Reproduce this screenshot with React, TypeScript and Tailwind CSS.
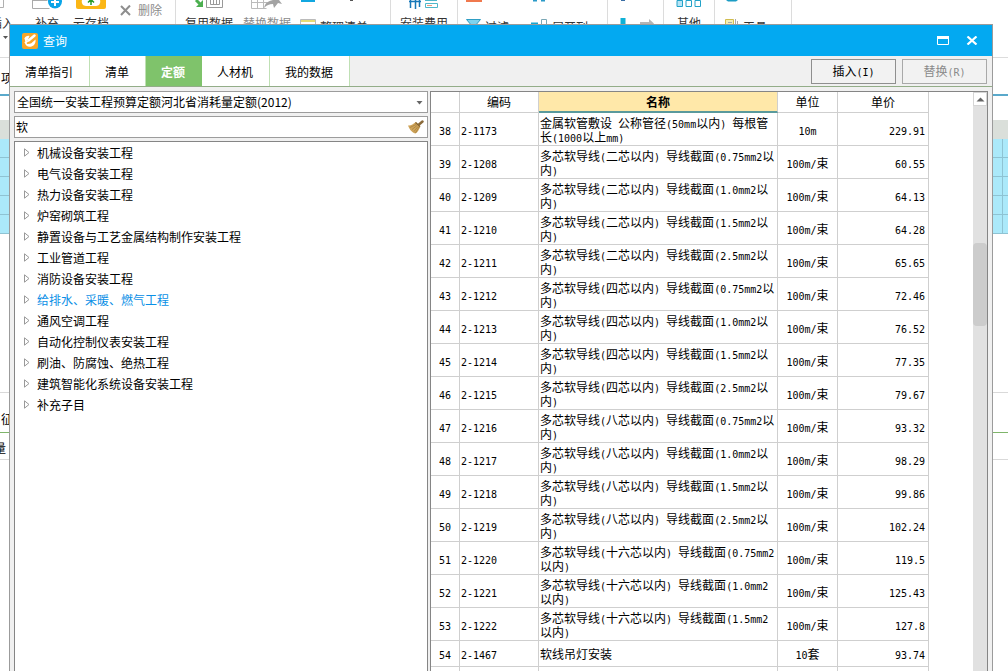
import React, { useState } from 'react';

const CATEGORIES = [
  '机械设备安装工程',
  '电气设备安装工程',
  '热力设备安装工程',
  '炉窑砌筑工程',
  '静置设备与工艺金属结构制作安装工程',
  '工业管道工程',
  '消防设备安装工程',
  '给排水、采暖、燃气工程',
  '通风空调工程',
  '自动化控制仪表安装工程',
  '刷油、防腐蚀、绝热工程',
  '建筑智能化系统设备安装工程',
  '补充子目'
];

const TABS = ['清单指引', '清单', '定额', '人材机', '我的数据'];

interface Row {
  no: number;
  code: string;
  name: string;
  unit: string;
  price: string;
}

const ROWS: Row[] = [
  { no: 38, code: '2-1173', name: '金属软管敷设 公称管径(50mm以内) 每根管长(1000以上mm)', unit: '10m', price: '229.91' },
  { no: 39, code: '2-1208', name: '多芯软导线(二芯以内) 导线截面(0.75mm2以内)', unit: '100m/束', price: '60.55' },
  { no: 40, code: '2-1209', name: '多芯软导线(二芯以内) 导线截面(1.0mm2以内)', unit: '100m/束', price: '64.13' },
  { no: 41, code: '2-1210', name: '多芯软导线(二芯以内) 导线截面(1.5mm2以内)', unit: '100m/束', price: '64.28' },
  { no: 42, code: '2-1211', name: '多芯软导线(二芯以内) 导线截面(2.5mm2以内)', unit: '100m/束', price: '65.65' },
  { no: 43, code: '2-1212', name: '多芯软导线(四芯以内) 导线截面(0.75mm2以内)', unit: '100m/束', price: '72.46' },
  { no: 44, code: '2-1213', name: '多芯软导线(四芯以内) 导线截面(1.0mm2以内)', unit: '100m/束', price: '76.52' },
  { no: 45, code: '2-1214', name: '多芯软导线(四芯以内) 导线截面(1.5mm2以内)', unit: '100m/束', price: '77.35' },
  { no: 46, code: '2-1215', name: '多芯软导线(四芯以内) 导线截面(2.5mm2以内)', unit: '100m/束', price: '79.67' },
  { no: 47, code: '2-1216', name: '多芯软导线(八芯以内) 导线截面(0.75mm2以内)', unit: '100m/束', price: '93.32' },
  { no: 48, code: '2-1217', name: '多芯软导线(八芯以内) 导线截面(1.0mm2以内)', unit: '100m/束', price: '98.29' },
  { no: 49, code: '2-1218', name: '多芯软导线(八芯以内) 导线截面(1.5mm2以内)', unit: '100m/束', price: '99.86' },
  { no: 50, code: '2-1219', name: '多芯软导线(八芯以内) 导线截面(2.5mm2以内)', unit: '100m/束', price: '102.24' },
  { no: 51, code: '2-1220', name: '多芯软导线(十六芯以内) 导线截面(0.75mm2以内)', unit: '100m/束', price: '119.5' },
  { no: 52, code: '2-1221', name: '多芯软导线(十六芯以内) 导线截面(1.0mm2以内)', unit: '100m/束', price: '125.43' },
  { no: 53, code: '2-1222', name: '多芯软导线(十六芯以内) 导线截面(1.5mm2以内)', unit: '100m/束', price: '127.8' },
  { no: 54, code: '2-1467', name: '软线吊灯安装', unit: '10套', price: '93.74' }
];

// Half-width characters go in a mono face, half as wide as the Chinese ones
const Mixed: React.FC<{ text: string }> = ({ text }) => (
  <>
    {text.split(/([\x20-\x7e]+)/).map((part, i) =>
      i % 2 ? (
        <span key={i} className="font-['DejaVu_Sans_Mono',monospace] text-[10px] leading-none">{part}</span>
      ) : (
        part
      )
    )}
  </>
);

const BigTool: React.FC<{ label: string; muted?: boolean; children?: React.ReactNode }> = ({ label, muted, children }) => (
  <button className={`flex flex-col items-center whitespace-nowrap leading-4 ${muted ? 'text-[#8c8c8c]' : 'text-[#333]'}`}>
    <span className="flex h-[15px] items-start justify-center">{children}</span>
    {label}
  </button>
);

const SmallTool: React.FC<{ label: string; top?: React.ReactNode; icon: React.ReactNode }> = ({ label, top, icon }) => (
  <div className="flex flex-col">
    <span className="flex h-[19px] items-start">{top}</span>
    <button className="flex items-start gap-1 whitespace-nowrap leading-4 text-[#333]">
      {icon}
      {label}
    </button>
  </div>
);

const Ribbon: React.FC = () => (
  <header className="flex h-[58px] items-stretch overflow-hidden border-b border-[#dcdcdc] bg-white">
    <div className="flex shrink-0 items-start border-r border-[#dcdcdc] pr-[13px]">
      <div className="-ml-[10px] mr-[21px] flex w-6 flex-col items-center">
        <BigTool label="插入">
          <svg width="24" height="9" viewBox="0 0 24 9" fill="none" stroke="#b0b0b0">
            <path d="M0 7.500h13.500V0M9.500 0v4" />
          </svg>
        </BigTool>
        <svg className="ml-[6px] mt-1" width="7" height="5" viewBox="0 0 7 5">
          <path d="M1 1h5L3.500 4z" fill="#555" />
        </svg>
      </div>
      <div className="flex w-6 justify-center">
        <BigTool label="补充">
          <svg width="32" height="10" viewBox="0 0 32 10" fill="none">
            <path d="M1.500 0v8.500h17M1.500 0.500h15" stroke="#aaa" />
            <circle cx="24" cy="1.500" r="7" fill="#0aa5e8" />
            <path d="M20 2h8M24 0v6" stroke="#fff" strokeWidth="2" />
          </svg>
        </BigTool>
      </div>
      <div className="ml-[14px] w-9">
        <BigTool label="云存档">
          <svg width="30" height="10" viewBox="0 0 30 10">
            <path d="M0 0h30v7a2 2 0 0 1-2 2H2a2 2 0 0 1-2-2z" fill="#fbb615" />
            <path d="M6 0h18c1 3-1 6-4 6H10C7 6 5 3 6 0z" fill="#fff" />
            <path d="M15 5V0M12 2.500l3-3 3 3" stroke="#2a9a2a" strokeWidth="1.500" fill="none" />
          </svg>
        </BigTool>
      </div>
      <button className="ml-[11px] mt-[2px] flex items-center gap-[7px] whitespace-nowrap leading-4 text-[#8c8c8c]">
        <svg width="11" height="11" viewBox="0 0 11 11" stroke="#8e8e8e" strokeWidth="2">
          <path d="M1 1l9 9M10 0.500L1 10" />
        </svg>
        删除
      </button>
    </div>

    <div className="flex shrink-0 items-start border-r border-[#dcdcdc] pl-[9px] pr-[22px]">
      <BigTool label="复用数据">
        <svg width="30" height="9" viewBox="0 0 30 9" fill="none">
          <path d="M2 0l5 5" stroke="#4caf50" strokeWidth="3" />
          <path d="M9 0v7H2z" fill="#4caf50" />
          <path d="M12.500 0v7.500h16V0M16.500 0v4.500h9V0M19.500 0v4M22.500 0v4" stroke="#999" />
        </svg>
      </BigTool>
      <div className="ml-[10px]">
        <BigTool label="替换数据" muted>
          <svg width="32" height="9" viewBox="0 0 32 9" fill="none">
            <path d="M0.500 0v8.500h15M0.500 2.500h16M6.500 0v8M12.500 0v8" stroke="#bbb" />
            <path d="M13 8c1-5 4-7 9-8h6l3 4-4-1-4 5-1-4c-4 0-6 1-9 4z" fill="#a3a3a3" />
          </svg>
        </BigTool>
      </div>
      <div className="ml-[9px]">
        <SmallTool
          label="整理清单"
          top={
            <svg width="54" height="4" viewBox="0 0 54 4">
              <path d="M1 0h14v2H1z" fill="#12a7e0" />
              <path d="M50 0h3v1h-3z" fill="#555" />
            </svg>
          }
          icon={
            <svg width="16" height="14" viewBox="0 0 16 14" fill="none">
              <path d="M0.500 0.500h15v13H0.500z" stroke="#bbb" />
              <path d="M1 1h14v2H1z" fill="#e7dc74" />
              <path d="M3 5.500h6M3 8.500h9" stroke="#58b0d8" />
            </svg>
          }
        />
      </div>
    </div>

    <div className="flex shrink-0 items-start border-r border-[#dcdcdc] px-[9px]">
      <BigTool label="安装费用">
        <svg width="30" height="10" viewBox="0 0 30 10" fill="none">
          <path d="M1.500 0v8M6.500 0v9M10.500 0v7M0 1.500h12" stroke="#1678b8" strokeWidth="1.500" />
          <path d="M16.500 3.500h12v4h-12zM16 0.500h12" stroke="#4fb7c9" />
          <path d="M18 5.500h5" stroke="#e59a7b" />
        </svg>
      </BigTool>
    </div>

    <div className="flex shrink-0 items-start gap-[22px] border-r border-[#dcdcdc] pl-2 pr-[19px]">
      <SmallTool
        label="过滤"
        top={
          <svg width="16" height="3" viewBox="0 0 16 3">
            <path d="M0 0h16v2H0z" fill="#f0794e" />
          </svg>
        }
        icon={
          <svg width="15" height="13" viewBox="0 0 15 13">
            <path d="M0.500 0.500h14L9 7v6l-3-2V7z" fill="#7ed3ee" stroke="#2f9ec4" />
          </svg>
        }
      />
      <SmallTool
        label="展开列"
        top={
          <svg width="16" height="3" viewBox="0 0 16 3">
            <path d="M2 0h4v1.500H2zM10 0h4v1.500h-4z" fill="#2b9ac8" />
          </svg>
        }
        icon={
          <svg width="17" height="13" viewBox="0 0 17 13" fill="none">
            <path d="M10.500 0.500h5v12h-5z" stroke="#7aa7b5" />
            <path d="M0 4.500h7" stroke="#18a5cf" strokeWidth="2" />
          </svg>
        }
      />
    </div>

    <div className="flex shrink-0 items-start gap-3 border-r border-[#dcdcdc] pl-[11px] pr-2">
      <svg width="8" height="30" viewBox="0 0 8 30">
        <path d="M2 0h4v1H2z" fill="#3a6ea5" />
        <path d="M1.500 18h5v12h-5z" fill="#0fb1d6" />
      </svg>
      <svg width="16" height="30" viewBox="0 0 16 30">
        <path d="M1 22h9v-3l5 4.500-5 4.500v-3H1z" fill="#b5b5b5" />
      </svg>
    </div>

    <div className="flex shrink-0 items-start justify-center border-r border-[#dcdcdc] px-3">
      <BigTool label="其他">
        <svg width="26" height="8" viewBox="0 0 26 8" fill="none" stroke="#22a2c8">
          <path d="M1 0.500h5.500v6H1z" fill="#b9e4f5" />
          <path d="M10 0.500h5.500v6H10zM19 0.500h5.500v6H19z" />
        </svg>
      </BigTool>
    </div>

    <div className="flex shrink-0 items-start border-r border-[#dcdcdc] pl-[9px] pr-6">
      <SmallTool
        label="工具"
        top={
          <svg width="16" height="3" viewBox="0 0 16 3">
            <path d="M2 0h12l-2 1.500H4z" fill="#1b9cc4" />
          </svg>
        }
        icon={
          <svg width="15" height="13" viewBox="0 0 15 13" fill="none">
            <path d="M1.500 0.500h8v12h-8z" fill="#f5eeb4" stroke="#d1bd50" />
            <path d="M11.500 0v12M13.500 2v9M4 3.500h4" stroke="#aaa" />
          </svg>
        }
      />
    </div>
  </header>
);

// Main workspace, seen only at the edges of the dialog
const Workspace: React.FC = () => (
  <div className="flex flex-col text-black">
    <div className="flex h-[38px] items-center border-b-2 border-[#5aa9cb] pl-px pt-1 leading-4">项</div>
    <div className="h-6" />
    <div className="h-[19px] bg-[#dadfda]" />
    {[0, 1, 2, 3, 4].map((n) => (
      <div key={n} className="flex h-[19px] justify-end border-b border-[#8fc3d3] bg-[#abe9fa]">
        <div className="w-[6px] border-l border-[#8fc3d3]" />
      </div>
    ))}
    <div className="h-[159px] border-b border-[#d9d9d9]" />
    <div className="h-[9px]" />
    <div className="flex h-[31px] items-center border-b border-[#7fb56a] pl-px pt-1 leading-4">征</div>
    <div className="flex h-[27px] items-center border-b border-[#d9d9d9] pt-1">
      <span className="-ml-1.5 leading-4">量</span>
    </div>
  </div>
);

const App: React.FC = () => {
  const [tab, setTab] = useState('定额');
  const [selected, setSelected] = useState('给排水、采暖、燃气工程');
  const [keyword, setKeyword] = useState('软');

  return (
    <div className="relative h-screen overflow-hidden bg-white font-['Noto_Sans_CJK_SC',sans-serif] text-xs text-black">
      <Ribbon />
      <Workspace />

      {/* Query dialog */}
      <div className="absolute bottom-0 left-[9px] right-[15px] top-6 flex flex-col border border-b-0 border-[#9b9b9b] bg-[#f0f0f0]">
        <div className="flex h-[31px] shrink-0 items-center bg-[#03a9f1] pl-3 pr-[14px] text-white">
          <svg width="16" height="16" viewBox="0 0 16 16" fill="none" strokeLinecap="round">
            <rect width="16" height="16" rx="2" fill="#f8a629" />
            <path d="M2.500 5.500C3 3.500 5.500 2.500 7.500 3L6 6.500 3.500 9z" fill="#fff" />
            <path d="M6.500 7.500L12.500 2.500" stroke="#fff" strokeWidth="2.500" />
            <path d="M3 10c.5 3 3.500 4.500 6.500 3.500 3-1 4.500-4 4-7L9 10.500z" fill="#fff" />
            <path d="M3.500 9.500L5 8.500" stroke="#fff" strokeWidth="2" />
            <path d="M5.500 10.500l2.500-.5 5-4.500" stroke="#f8a629" />
          </svg>
          <h1 className="ml-[5px] flex-1 leading-4">查询</h1>
          <button aria-label="最大化" className="mr-[17px]">
            <svg width="12" height="9" viewBox="0 0 12 9" fill="none" stroke="#fff">
              <path d="M0.500 0.500h11v8H0.500z" />
              <path d="M0 1.500h12" strokeWidth="3" />
            </svg>
          </button>
          <button aria-label="关闭">
            <svg width="12" height="9" viewBox="0 0 12 9" stroke="#fff" strokeWidth="2.200">
              <path d="M1.500 0.500l9 8M10.500 0.500l-9 8" />
            </svg>
          </button>
        </div>

        <div className="flex h-[31px] shrink-0 items-center justify-between border-b border-[#93ad88] pr-[5px]">
          <div role="tablist" className="flex h-full bg-white">
            {TABS.map((t) => (
              <button
                key={t}
                role="tab"
                aria-selected={t === tab}
                onClick={() => setTab(t)}
                className={`whitespace-nowrap border-r pl-[15px] pr-4 pt-[2px] ${
                  t === tab ? 'border-[#7fc36b] bg-[#7fc36b] font-bold text-white' : 'border-[#bfe0b4]'
                }`}
              >
                {t}
              </button>
            ))}
          </div>
          <div className="flex gap-[6px]">
            <button className="h-[25px] w-[85px] border border-[#8f8f8f] bg-[#f2f2f2]">
              <Mixed text="插入(I)" />
            </button>
            <button disabled className="h-[25px] w-[85px] border border-[#a9a9a9] bg-[#f2f2f2] text-[#8a8a8a]">
              <Mixed text="替换(R)" />
            </button>
          </div>
        </div>

        <div className="flex min-h-0 flex-1 gap-[2px] px-1 pt-1">
          <div className="flex w-[414px] shrink-0 flex-col gap-[3px]">
            <div className="relative shrink-0">
              <select aria-label="定额库" className="block h-[22px] w-full appearance-none border border-[#9c9c9c] bg-white pl-[2px] pr-5">
                <option>全国统一安装工程预算定额河北省消耗量定额(2012)</option>
              </select>
              <svg className="pointer-events-none absolute right-[5px] top-[10px]" width="7" height="4" viewBox="0 0 7 4">
                <path d="M0.500 0h6L3.500 3.500z" fill="#666" />
              </svg>
            </div>
            <div className="flex h-[22px] shrink-0 items-center border border-[#9c9c9c] bg-white pr-[3px]">
              <input
                aria-label="搜索定额"
                className="min-w-0 flex-1 pl-px outline-none"
                value={keyword}
                onChange={(e) => setKeyword(e.target.value)}
              />
              <button aria-label="清空" onClick={() => setKeyword('')}>
                <svg width="17" height="16" viewBox="0 0 17 16" fill="none">
                  <path d="M15.500 2.500L12 5.500" stroke="#8a6a3a" strokeWidth="2.500" strokeLinecap="round" />
                  <path d="M1 6.500c3 .5 5-1.500 8-3.500l4.500 4.500C12 10 11 13 8.500 14.500 6 14 2.500 11 1 6.500z" fill="#cfa45a" />
                  <path d="M3 8.500l6-3M5 10.500l5-4M7 12.500l4-5M8.500 14l3.500-6" stroke="#a27c3c" strokeWidth="0.700" />
                  <path d="M8.500 3.500l4.500 4" stroke="#80602f" strokeWidth="1.200" />
                </svg>
              </button>
            </div>
            <ul className="min-h-0 flex-1 overflow-hidden border border-b-0 border-[#858585] bg-white">
              {CATEGORIES.map((c) => (
                <li key={c}>
                  <button
                    onClick={() => setSelected(c)}
                    className={`flex h-[21px] w-full items-center gap-[7px] pl-[9px] leading-4 ${c === selected ? 'text-[#0a8fe6]' : ''}`}
                  >
                    <svg width="6" height="9" viewBox="0 0 6 9" fill="none" stroke="#999">
                      <path d="M0.500 0.800v7.400L5 4.500z" />
                    </svg>
                    {c}
                  </button>
                </li>
              ))}
            </ul>
          </div>

          <div className="flex min-w-0 flex-1 items-stretch justify-between overflow-hidden border border-b-0 border-[#858585] bg-white">
            <div className="overflow-hidden">
              <table className="w-[498px] table-fixed border-separate border-spacing-0 leading-[14px]">
                <thead>
                  <tr className="h-[21px] [&>th]:border-b [&>th]:border-r [&>th]:border-[#cfcfcf] [&>th]:p-0 [&>th]:font-normal">
                    <th className="w-[29px]" />
                    <th className="w-[79px]">编码</th>
                    <th className="w-[239px] border-b-2! border-b-[#5a9a9c]! bg-[#ffe8a9] font-bold!">名称</th>
                    <th className="w-[60px]">单位</th>
                    <th className="w-[91px]">单价</th>
                  </tr>
                </thead>
                <tbody className="[&_td]:border-b [&_td]:border-r [&_td]:border-[#cfcfcf] [&_td]:p-0 [&_td]:pt-px">
                  {ROWS.map((r) => (
                    <tr key={r.no} className={r.name.length > 12 ? 'h-[33px]' : 'h-[26px]'}>
                      <td className="text-center"><Mixed text={String(r.no)} /></td>
                      <td className="pl-px!"><Mixed text={r.code} /></td>
                      <td className="pl-px!"><Mixed text={r.name} /></td>
                      <td className="text-center"><Mixed text={r.unit} /></td>
                      <td className="pr-[3px]! text-right"><Mixed text={r.price} /></td>
                    </tr>
                  ))}
                  <tr className="h-[33px]">
                    <td />
                    <td />
                    <td />
                    <td />
                    <td />
                  </tr>
                </tbody>
              </table>
            </div>
            <div className="w-[14px] shrink-0 bg-[#e1e1e1]">
              <button aria-label="向上滚动" className="flex h-[14px] w-full items-center justify-center border border-[#d5d5d5] bg-white">
                <svg width="9" height="5" viewBox="0 0 9 5">
                  <path d="M0.500 4.500L4.500 0.500l4 4z" fill="#666" />
                </svg>
              </button>
              <div className="mt-[137px] h-[83px] rounded-sm bg-[#cccccc]" />
            </div>
          </div>
        </div>
      </div>
    </div>
  );
};

export default App;
